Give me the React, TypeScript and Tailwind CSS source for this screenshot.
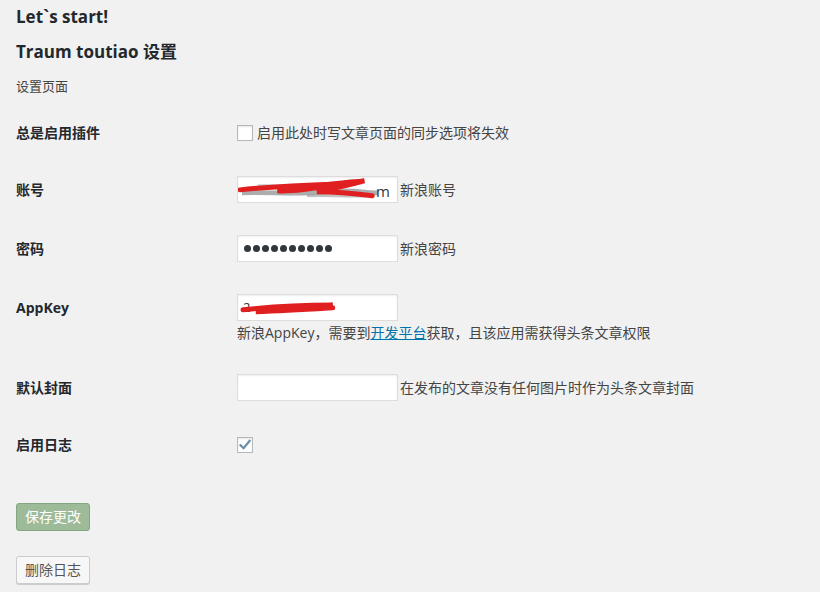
import React from "react";

const font = { fontFamily: '"Open Sans", "Noto Sans CJK SC", sans-serif' };

const Check = ({ checked }: { checked?: boolean }) => (
  <span className="relative inline-block w-4 h-4 bg-white border border-[#b4b9be] shadow-[inset_0_1px_2px_rgba(0,0,0,0.1)] shrink-0">
    {checked && (
      <svg viewBox="0 0 16 16" className="absolute -left-px -top-px w-4 h-4">
        <path d="M3.5 8.2 L6.6 11.2 L12.6 3.8" fill="none" stroke="#6b8ea6" strokeWidth="2.2" strokeLinecap="square" />
      </svg>
    )}
  </span>
);

const Field = ({ children }: { children?: React.ReactNode }) => (
  <div className="relative w-[161px] h-[27px] bg-white border border-[#ddd] shadow-[inset_0_1px_2px_rgba(0,0,0,0.07)] overflow-hidden shrink-0">
    {children}
  </div>
);

const Row = ({ label, className, children }: { label: string; className?: string; children: React.ReactNode }) => (
  <div className={"flex items-start " + (className ?? "")}>
    <div className="w-[221px] shrink-0 h-[27px] flex items-center text-[14px] font-bold text-[#23282d]">{label}</div>
    <div className="flex flex-col">{children}</div>
  </div>
);

export default function App() {
  return (
    <div className="min-h-[592px] bg-[#f1f1f1] px-4 text-[#444]" style={font}>
      <h1 className="pt-[5px] text-[17px] leading-[24px] font-bold text-[#23282d]">Let`s start!</h1>
      <h2 className="mt-[11px] text-[17px] leading-[24px] font-bold text-[#23282d]">Traum toutiao 设置</h2>
      <p className="mt-[12px] text-[13px] leading-[20px]">设置页面</p>

      <Row label="总是启用插件" className="mt-[23px]">
        <div className="flex items-center h-[27px] gap-[4px]">
          <Check />
          <span className="text-[14px]">启用此处时写文章页面的同步选项将失效</span>
        </div>
      </Row>

      <Row label="账号" className="mt-[30px]">
        <div className="flex items-center gap-[2px]">
          <Field>
            <svg viewBox="0 0 161 27" className="absolute inset-0">
              <path d="M4 16 C30 15 60 18 90 15 S130 17 142 16" stroke="#8a8a8a" strokeWidth="5" fill="none" opacity="0.7" />
              <path d="M20 9 C30 8 50 10 60 9 M70 19 C90 18 110 20 130 19" stroke="#9a9a9a" strokeWidth="3" fill="none" opacity="0.6" />
              <path d="M2 13 C40 9 70 8 100 7 C80 12 50 15 40 14 C70 10 110 5 128 4 C110 9 90 13 80 15 C100 15 120 17 136 19" stroke="#e02020" strokeWidth="5" fill="none" strokeLinecap="round" />
            </svg>
            <span className="absolute right-[7px] top-[3px] text-[15px] text-[#32373c]">m</span>
          </Field>
          <span className="text-[14px]">新浪账号</span>
        </div>
      </Row>

      <Row label="密码" className="mt-[32px]">
        <div className="flex items-center gap-[2px]">
          <Field>
            <div className="absolute left-[6px] top-[9px] flex gap-[2px]">
              {Array.from({ length: 10 }).map((_, i) => (
                <span key={i} className="w-[7px] h-[7px] rounded-full bg-[#32373c]" />
              ))}
            </div>
          </Field>
          <span className="text-[14px]">新浪密码</span>
        </div>
      </Row>

      <Row label="AppKey" className="mt-[32px]">
        <Field>
          <span className="absolute left-[5px] top-[3px] text-[13px] text-[#32373c]">2</span>
          <svg viewBox="0 0 161 27" className="absolute inset-0">
            <path d="M5 15 C40 11 70 10 96 10 C70 13 40 15 18 17 C50 16 80 14 96 13" stroke="#e02020" strokeWidth="5" fill="none" strokeLinecap="round" />
          </svg>
        </Field>
        <p className="mt-[1px] text-[14px] leading-[22px]">
          新浪AppKey，需要到<a className="text-[#0073aa] underline">开发平台</a>获取，且该应用需获得头条文章权限
        </p>
      </Row>

      <Row label="默认封面" className="mt-[30px]">
        <div className="flex items-center gap-[2px]">
          <Field />
          <span className="text-[14px]">在发布的文章没有任何图片时作为头条文章封面</span>
        </div>
      </Row>

      <Row label="启用日志" className="mt-[30px]">
        <div className="flex items-center h-[27px]">
          <Check checked />
        </div>
      </Row>

      <div className="mt-[45px] flex flex-col items-start gap-[25px]">
        <button className="h-[28px] px-[8px] rounded-[3px] bg-[#9dba99] border border-[#84a681] text-white text-[14px] leading-[26px]">保存更改</button>
        <button className="h-[28px] px-[8px] rounded-[3px] bg-[#f7f7f7] border border-[#ccc] shadow-[0_1px_0_#ccc] text-[#555] text-[14px] leading-[26px]">删除日志</button>
      </div>
    </div>
  );
}
